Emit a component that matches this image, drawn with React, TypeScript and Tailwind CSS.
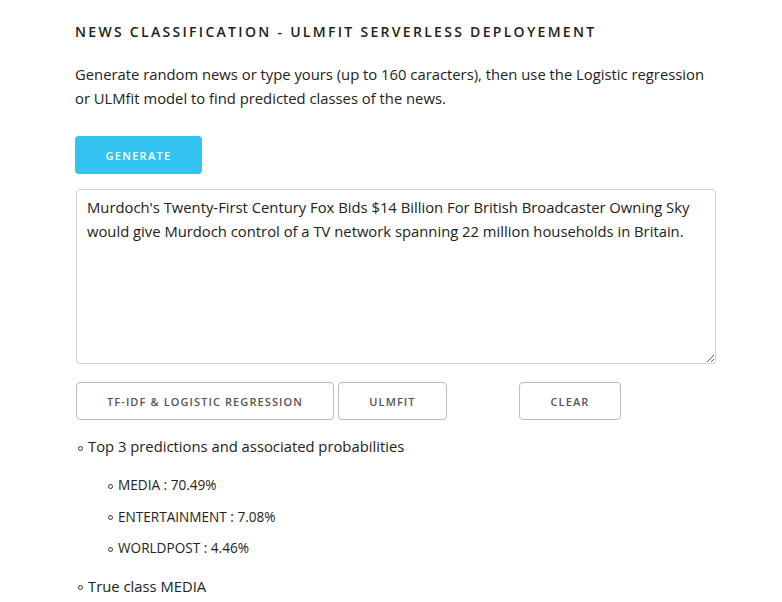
import React from 'react';

const news =
  "Murdoch's Twenty-First Century Fox Bids $14 Billion For British Broadcaster Owning Sky would give Murdoch control of a TV network spanning 22 million households in Britain.";

const predictions = [
  { label: 'MEDIA', prob: '70.49%' },
  { label: 'ENTERTAINMENT', prob: '7.08%' },
  { label: 'WORLDPOST', prob: '4.46%' },
];

const outlineBtn =
  'h-[38px] pt-[2px] rounded-[4px] border border-[#bbbbbb] bg-white text-[11px] font-semibold uppercase tracking-[1.1px] text-[#555555]';

const Bullet = () => (
  <span className="mr-[5px] inline-block h-[5px] w-[5px] rounded-full border border-[#333333] align-middle" />
);

const App = () => {
  return (
    <div className="min-h-[602px] w-[782px] bg-white font-['Open_Sans',sans-serif] text-[#222222]">
      <div className="w-[641px] ml-[75px] pt-[22px]">
        <h4 className="text-[14px] leading-[20px] font-semibold tracking-[2.3px] text-[#222222]">
          NEWS CLASSIFICATION - ULMFIT SERVERLESS DEPLOYEMENT
        </h4>

        <p className="mt-[20px] text-[14.8px] leading-[24px]">
          Generate random news or type yours (up to 160 caracters), then use the Logistic regression or ULMfit model to find predicted classes of the news.
        </p>

        <button className="mt-[26px] h-[38px] w-[127px] pt-[2px] rounded-[4px] bg-[#33c3f0] text-[11px] font-semibold uppercase tracking-[1.3px] text-white">
          Generate
        </button>

        <textarea
          defaultValue={news}
          className="mt-[15px] ml-px block h-[175px] w-[640px] resize rounded-[4px] border border-[#d1d1d1] px-[10px] pt-[5px] pb-[6px] text-[14.8px] leading-[24px] text-[#222222] outline-none"
        />

        <div className="mt-[18px] ml-px flex">
          <button className={`${outlineBtn} w-[258px]`}>TF-IDF &amp; Logistic Regression</button>
          <button className={`${outlineBtn} ml-[4px] w-[109px]`}>ULMfit</button>
          <button className={`${outlineBtn} ml-[72px] w-[102px]`}>Clear</button>
        </div>

        <ul className="mt-[14px] text-[14.8px] leading-[24px]">
          <li className="pl-[3px]">
            <Bullet />
            Top 3 predictions and associated probabilities
            <ul className="mt-[16px] mb-[15px] ml-[30px] text-[13.6px] leading-[21.6px]">
              {predictions.map((p) => (
                <li key={p.label} className="mb-[10px] last:mb-0">
                  <Bullet />
                  {p.label} : {p.prob}
                </li>
              ))}
            </ul>
          </li>
          <li className="pl-[3px]">
            <Bullet />
            True class MEDIA
          </li>
        </ul>
      </div>
    </div>
  );
};

export default App;
